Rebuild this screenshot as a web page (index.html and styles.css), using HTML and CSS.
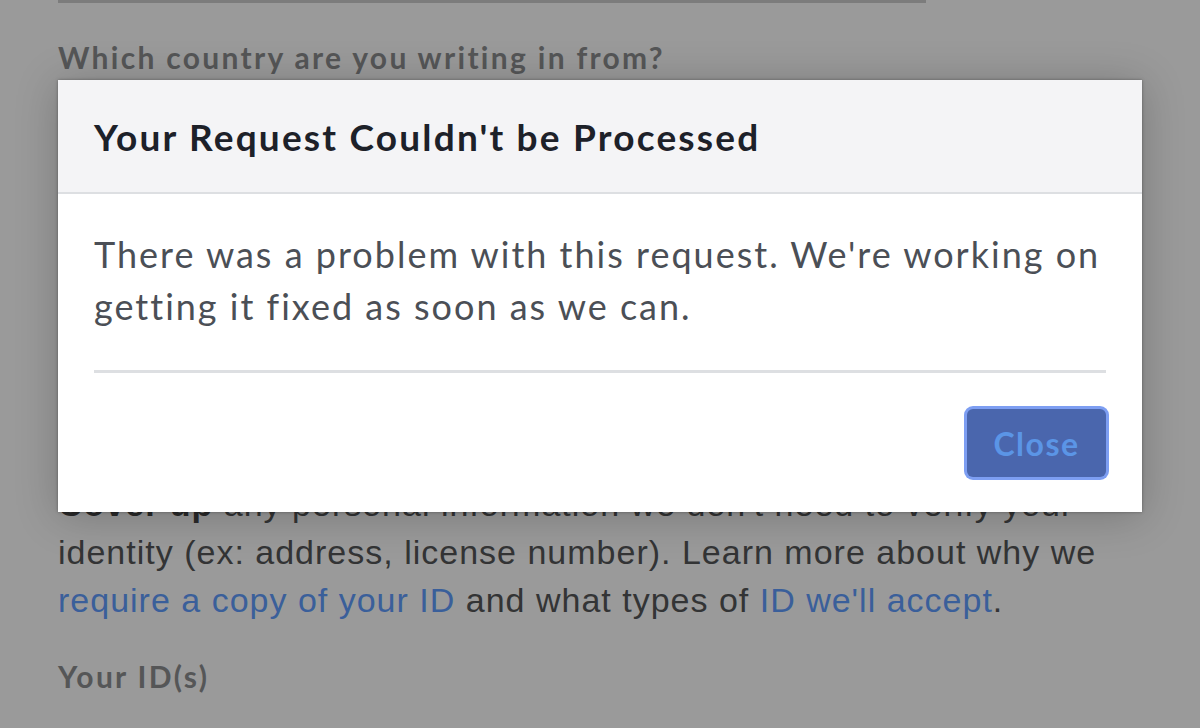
FILE: index.html
```html
<!DOCTYPE html>
<html lang="en">
<head>
<meta charset="utf-8">
<title>Request error</title>
<link rel="stylesheet" href="styles.css">
</head>
<body>
<div class="page">
  <div class="field-bottom"></div>
  <div class="label">Which country are you writing in from?</div>
  <div class="hidden-area"></div>
  <p class="info"><b>Cover up</b> any personal information we don't need to verify your<br>identity (ex: address, license number). Learn more about why we<br><a href="#">require a copy of your ID</a> and what types of <a href="#">ID we'll accept</a>.</p>
  <div class="label label-ids">Your ID(s)</div>
</div>

<div class="modal" role="dialog">
  <div class="modal-header">
    <h2 class="modal-title">Your Request Couldn't be Processed</h2>
  </div>
  <div class="modal-body">
    <p class="modal-text">There was a problem with this request. We're working on<br>getting it fixed as soon as we can.</p>
    <div class="divider"></div>
  </div>
  <div class="modal-footer">
    <button class="btn-close">Close</button>
  </div>
</div>
</body>
</html>
```

FILE: styles.css
```css
html, body {
  margin: 0;
  padding: 0;
}
body {
  width: 1200px;
  height: 728px;
  overflow: hidden;
  background: #9a9a9a;
  position: relative;
}
.page {
  padding: 0 58px;
}
.field-bottom {
  width: 868px;
  height: 3px;
  background: #7c7c7c;
}
.label {
  margin-top: 36px;
  font-family: Lato, "Noto Sans", sans-serif;
  font-weight: 700;
  font-size: 30px;
  line-height: 36px;
  letter-spacing: 2.3px;
  color: #555657;
}
.hidden-area {
  height: 405px;
}
.info {
  margin: 0;
  font-family: "Liberation Sans", Arial, sans-serif;
  font-size: 34px;
  line-height: 48px;
  letter-spacing: 1px;
  color: #333435;
  white-space: nowrap;
}
.info b {
  color: #2a2a2a;
}
.info a {
  color: #3a5f9a;
  text-decoration: none;
}
.label-ids {
  margin-top: 34px;
}

.modal {
  position: absolute;
  left: 58px;
  top: 80px;
  width: 1084px;
  background: #ffffff;
  box-shadow: 0 0 3px rgba(0, 0, 0, 0.35), 0 4px 40px rgba(0, 0, 0, 0.22);
  font-family: Lato, "Noto Sans", sans-serif;
}
.modal-header {
  height: 112px;
  background: #f4f4f6;
  border-bottom: 2px solid #dddfe2;
  display: flex;
  align-items: center;
  padding: 0 36px;
}
.modal-title {
  margin: 0;
  font-size: 37px;
  font-weight: 700;
  letter-spacing: 2.2px;
  color: #1d2129;
}
.modal-body {
  padding: 34px 36px 0;
}
.modal-text {
  margin: 0;
  font-size: 36px;
  line-height: 52px;
  letter-spacing: 2px;
  color: #4b4f56;
  white-space: nowrap;
}
.divider {
  margin-top: 38px;
  height: 3px;
  background: #dddfe2;
}
.modal-footer {
  display: flex;
  justify-content: flex-end;
  padding: 36px 36px 35px;
}
.btn-close {
  width: 139px;
  height: 68px;
  border: none;
  border-radius: 6px;
  background: #4a66ad;
  color: #5b95e6;
  font-family: Lato, "Noto Sans", sans-serif;
  font-weight: 700;
  font-size: 32px;
  letter-spacing: 1.5px;
  box-shadow: 0 0 0 3px #7d9ef2;
  outline: none;
  padding: 0;
}
```
